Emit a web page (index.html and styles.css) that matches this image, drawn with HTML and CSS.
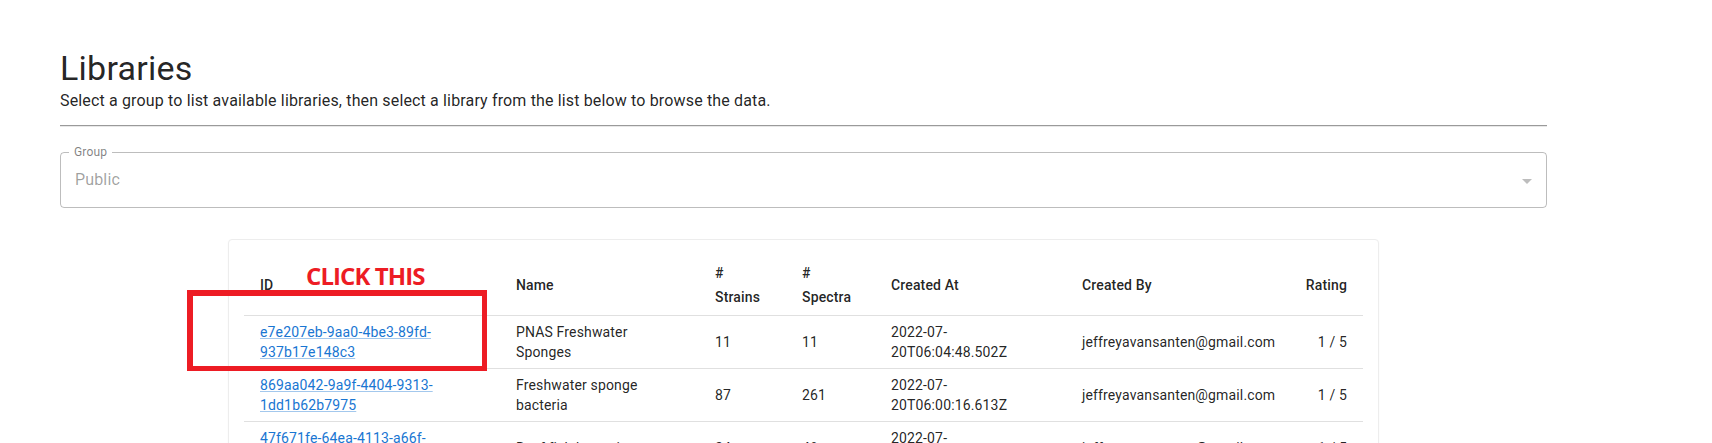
FILE: index.html
```html
<!DOCTYPE html>
<html lang="en">
<head>
<meta charset="utf-8">
<title>Libraries</title>
<link rel="stylesheet" href="styles.css">
</head>
<body>
<div class="page">
  <main class="content">
    <h1 class="title">Libraries</h1>
    <p class="subtitle">Select a group to list available libraries, then select a library from the list below to browse the data.</p>
    <hr class="divider">
    <div class="select">
      <span class="select-label">Group</span>
      <span class="select-value">Public</span>
      <svg class="select-icon" viewBox="0 0 24 24" width="24" height="24"><path d="M7 10l5 5 5-5z"/></svg>
    </div>
    <div class="card">
      <table class="table">
        <colgroup>
          <col class="c-id"><col class="c-name"><col class="c-strains"><col class="c-spectra"><col class="c-created"><col class="c-by"><col class="c-rating">
        </colgroup>
        <thead>
          <tr>
            <th>ID</th>
            <th>Name</th>
            <th># Strains</th>
            <th># Spectra</th>
            <th>Created At</th>
            <th>Created By</th>
            <th class="right">Rating</th>
          </tr>
        </thead>
        <tbody>
          <tr>
            <td><a class="link" href="#">e7e207eb-9aa0-4be3-89fd-937b17e148c3</a></td>
            <td>PNAS Freshwater Sponges</td>
            <td>11</td>
            <td>11</td>
            <td>2022-07-20T06:04:48.502Z</td>
            <td>jeffreyavansanten@gmail.com</td>
            <td class="right">1 / 5</td>
          </tr>
          <tr>
            <td><a class="link" href="#">869aa042-9a9f-4404-9313-1dd1b62b7975</a></td>
            <td>Freshwater sponge bacteria</td>
            <td>87</td>
            <td>261</td>
            <td>2022-07-20T06:00:16.613Z</td>
            <td>jeffreyavansanten@gmail.com</td>
            <td class="right">1 / 5</td>
          </tr>
          <tr>
            <td><a class="link" href="#">47f671fe-64ea-4113-a66f-2c5d8e1b9a04</a></td>
            <td>Reef fish bacteria</td>
            <td>24</td>
            <td>48</td>
            <td>2022-07-19T21:15:02.118Z</td>
            <td>jeffreyavansanten@gmail.com</td>
            <td class="right">1 / 5</td>
          </tr>
        </tbody>
      </table>
    </div>
  </main>
  <div class="annot-box"></div>
  <div class="annot-text">CLICK THIS</div>
</div>
</body>
</html>
```

FILE: styles.css
```css
* { box-sizing: border-box; }
html, body { margin: 0; padding: 0; background: #fff; }
body {
  font-family: Roboto, "Liberation Sans", Arial, sans-serif;
  color: rgba(0,0,0,0.87);
  overflow: hidden;
}
.page {
  position: relative;
  min-height: 443px;
}
.content {
  width: 1547px;
  padding: 47px 0 0 60px;
}
.title {
  margin: 0;
  font-size: 34px;
  font-weight: 400;
  line-height: 42px;
  letter-spacing: 0.25px;
}
.subtitle {
  margin: 0;
  font-size: 16px;
  line-height: 24px;
  letter-spacing: 0.15px;
}
.divider {
  margin: 12px 0 0;
  border: 0;
  border-top: 1px solid #9a9a9a;
  border-bottom: 1px solid #e8e8e8;
  height: 0;
}
.select {
  position: relative;
  margin-top: 25px;
  height: 56px;
  border: 1px solid rgba(0,0,0,0.26);
  border-radius: 4px;
  display: flex;
  align-items: center;
  padding: 0 14px;
}
.select-label {
  position: absolute;
  left: 8px;
  top: -9px;
  padding: 0 5px;
  background: #fff;
  font-size: 12px;
  line-height: 16px;
  color: rgba(0,0,0,0.5);
  letter-spacing: 0.15px;
}
.select-value {
  font-size: 16px;
  line-height: 23px;
  color: rgba(0,0,0,0.38);
  letter-spacing: 0.15px;
  padding-bottom: 2px;
}
.select-icon {
  position: absolute;
  right: 7px;
  top: 16px;
  fill: rgba(0,0,0,0.26);
}
.card {
  width: 1151px;
  margin: 31px auto 0;
  padding: 15px;
  border: 1px solid #ededed;
  border-radius: 4px;
  box-shadow: 0 1px 2px rgba(0,0,0,0.04);
  background: #fff;
}
.table {
  width: 1119px;
  table-layout: fixed;
  border-collapse: collapse;
  font-size: 14px;
}
.c-id { width: 256px; }
.c-name { width: 199px; }
.c-strains { width: 87px; }
.c-spectra { width: 89px; }
.c-created { width: 191px; }
.c-by { width: 223px; }
.c-rating { width: 74px; }
.table th {
  text-align: left;
  font-weight: 500;
  line-height: 24px;
  padding: 6px 16px;
  border-bottom: 1px solid #e0e0e0;
  vertical-align: middle;
  letter-spacing: 0.15px;
}
.table td {
  line-height: 20px;
  padding: 6px 16px;
  border-bottom: 1px solid #e0e0e0;
  vertical-align: middle;
  letter-spacing: 0.15px;
  white-space: normal;
}
.table .right { text-align: right; }
.link {
  color: #1976d2;
  text-decoration: underline;
  text-decoration-color: rgba(25,118,210,0.4);
}
.annot-box {
  position: absolute;
  left: 187px;
  top: 290px;
  width: 300px;
  height: 81px;
  border-style: solid;
  border-color: #ed1c24;
  border-width: 6px 5px 5px 6px;
}
.annot-text {
  position: absolute;
  left: 306px;
  top: 264px;
  font-family: "Open Sans", "Noto Sans", sans-serif;
  font-weight: 700;
  font-size: 24px;
  line-height: 24px;
  letter-spacing: -0.9px;
  color: #ed1c24;
  white-space: nowrap;
}
```
